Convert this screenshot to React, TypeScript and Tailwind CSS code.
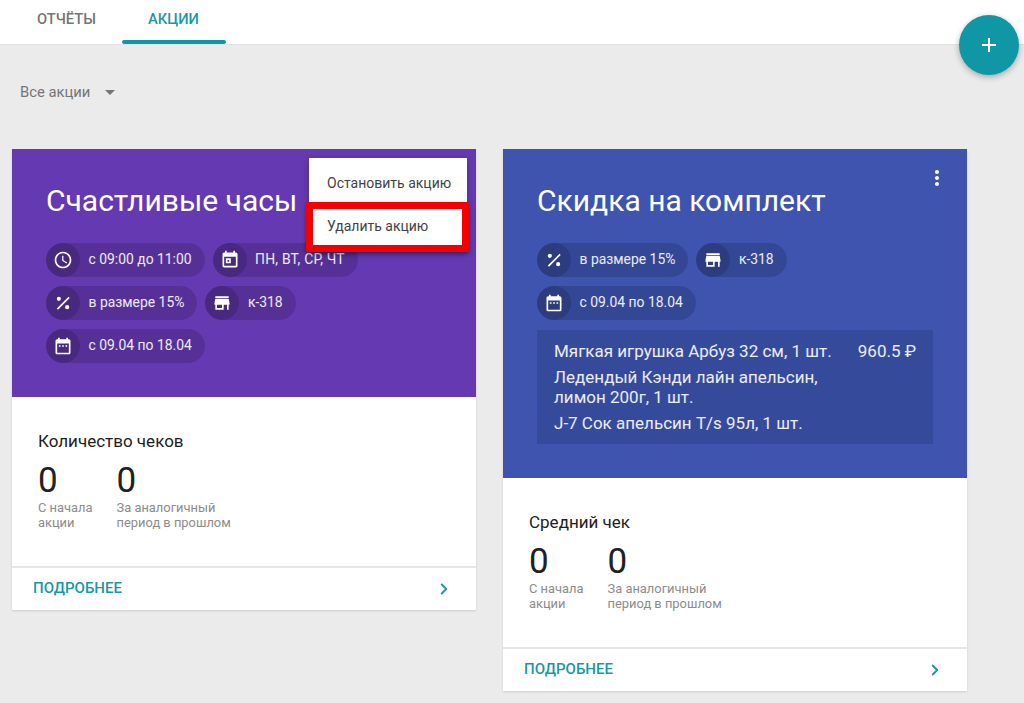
import { ChevronRight } from "lucide-react";

const icons = {
  clock:
    "M11.99 2C6.47 2 2 6.48 2 12s4.47 10 9.99 10C17.52 22 22 17.52 22 12S17.52 2 11.99 2zM12 20c-4.42 0-8-3.58-8-8s3.58-8 8-8 8 3.58 8 8-3.58 8-8 8zm.5-13H11v6l5.25 3.15.75-1.23-4.5-2.67z",
  event:
    "M7 10h6v6H7v-6zm2 2v2h2v-2H9zM16 1v2H8V1H6v2H5c-1.11 0-1.99.9-1.99 2L3 19c0 1.1.89 2 2 2h14c1.1 0 2-.9 2-2V5c0-1.1-.9-2-2-2h-1V1h-2zm3 18H5V8h14v11z",
  percent:
    "M18.6 4.6 20 6 6 20l-1.4-1.4L18.6 4.6zM7 4.5a2.5 2.5 0 1 1 0 5 2.5 2.5 0 0 1 0-5zM17 14.5a2.5 2.5 0 1 1 0 5 2.5 2.5 0 0 1 0-5z",
  store:
    "M20 4H4v2h16V4zm1 10v-2l-1-5H4l-1 5v2h1v6h10v-6h4v6h2v-6h1zm-9 4H6v-4h6v4z",
  range:
    "M9 11H7v2h2v-2zm4 0h-2v2h2v-2zm4 0h-2v2h2v-2zm2-7h-1V2h-2v2H8V2H6v2H5c-1.11 0-1.99.9-1.99 2L3 20c0 1.1.89 2 2 2h14c1.1 0 2-.9 2-2V6c0-1.1-.9-2-2-2zm0 16H5V9h14v11z",
};

type IconName = keyof typeof icons;

function Pill({ icon, text, wide = false }: { icon: IconName; text: string; wide?: boolean }) {
  return (
    <div className="flex h-[34px] items-center rounded-full bg-black/15 pr-[13px]">
      <div className="flex h-[34px] w-[34px] items-center justify-center rounded-full bg-black/15">
        <svg className="h-5 w-5 fill-white" viewBox="0 0 24 24">
          <path d={icons[icon]} />
        </svg>
      </div>
      <span
        className={
          wide
            ? "ml-[8.5px] text-[13.9px] leading-none tracking-[0.2px] text-white/90"
            : "ml-[8.5px] text-[13.9px] leading-none text-white/90"
        }
      >
        {text}
      </span>
    </div>
  );
}

function Stats({ title }: { title: string }) {
  return (
    <div className="px-[26px] pb-[36px] pt-[32px]">
      <div className="text-[17px] leading-[24px] text-[#212121]">{title}</div>
      <div className="mt-[8px] flex gap-[24px]">
        <div>
          <div className="text-[35px] leading-[40px] text-[#212121]">0</div>
          <div className="-mt-[1px] text-[12.9px] leading-[15px] text-[#8c8c8c]">
            С начала
            <br />
            акции
          </div>
        </div>
        <div>
          <div className="text-[35px] leading-[40px] text-[#212121]">0</div>
          <div className="-mt-[1px] text-[12.9px] leading-[15px] text-[#8c8c8c]">
            За аналогичный
            <br />
            период в прошлом
          </div>
        </div>
      </div>
    </div>
  );
}

function CardFooter() {
  return (
    <div className="flex h-[44px] items-center justify-between border-t-2 border-[#e6e6e6] pb-[1px] pl-[21px] pr-[23px]">
      <span className="text-[15px] font-medium text-[#1a97a5]">ПОДРОБНЕЕ</span>
      <ChevronRight className="h-[18px] w-[18px] text-[#1a97a5]" strokeWidth={2.5} />
    </div>
  );
}

export default function App() {
  return (
    <div
      className="relative h-[703px] overflow-hidden bg-[#ebebeb]"
      style={{ fontFamily: "Roboto, sans-serif" }}
    >
      <div className="flex h-[45px] border-b border-[#e2e2e2] bg-white pl-[11px]">
        <div className="w-[111px] pl-[26px] pt-[10px] text-[14.7px] font-medium leading-[18px] text-[#757575]">
          ОТЧЁТЫ
        </div>
        <div className="relative w-[104px] pl-[26px] pt-[10px] text-[14.7px] font-medium leading-[18px] text-[#1a97a5]">
          АКЦИИ
          <div className="absolute bottom-0 left-0 right-0 h-[4px] rounded-full bg-[#0f97a5]" />
        </div>
      </div>

      <button className="absolute left-[959px] top-[15px] flex h-[60px] w-[60px] items-center justify-center rounded-full bg-[#0f97a5] shadow-[0_2px_6px_rgba(0,0,0,0.3)]">
        <svg className="h-6 w-6 fill-white" viewBox="0 0 24 24">
          <path d="M19 13h-6v6h-2v-6H5v-2h6V5h2v6h6v2z" />
        </svg>
      </button>

      <div className="flex items-center pl-[20px] pt-[35px] text-[14.8px] leading-[24px] text-[#757575]">
        Все акции
        <div className="ml-[15px] h-0 w-0 border-x-[5px] border-t-[5px] border-x-transparent border-t-[#757575]" />
      </div>

      <div className="mt-[45px] flex items-start gap-[27px] pl-[12px]">
        <div className="relative w-[464px] bg-white shadow-[0_1px_2px_rgba(0,0,0,0.12)]">
          <div className="bg-[#6539b1] px-[34px] pb-[34px] pt-[34px]">
            <h2 className="text-[30px] leading-[36px] text-white">Счастливые часы</h2>
            <div className="mt-[24px] flex flex-wrap gap-x-[8px] gap-y-[9px]">
              <Pill icon="clock" text="с 09:00 до 11:00" />
              <Pill icon="event" text="ПН, ВТ, СР, ЧТ" wide />
              <Pill icon="percent" text="в размере 15%" />
              <Pill icon="store" text="к-318" />
              <Pill icon="range" text="с 09.04 по 18.04" />
            </div>
          </div>
          <Stats title="Количество чеков" />
          <CardFooter />

          <div className="absolute left-[297px] top-[9px] w-[158px] bg-white text-[14px] text-[#424242] shadow-[0_2px_6px_rgba(0,0,0,0.25)]">
            <div className="flex h-[44px] items-center pl-[18px] pt-[6px]">Остановить акцию</div>
            <div className="-ml-[3px] -mr-[2px] flex h-[50px] items-center rounded-[2px] border-[7px] border-[#f50000] bg-white pb-[2px] pl-[14px] shadow-[0_2px_4px_rgba(0,0,0,0.3)]">
              Удалить акцию
            </div>
          </div>
        </div>

        <div className="relative w-[464px] bg-white shadow-[0_1px_2px_rgba(0,0,0,0.12)]">
          <div className="bg-[#3e54ae] px-[34px] pb-[34px] pt-[34px]">
            <h2 className="text-[30px] leading-[36px] text-white">Скидка на комплект</h2>
            <div className="mt-[24px] flex flex-wrap gap-x-[8px] gap-y-[9px]">
              <Pill icon="percent" text="в размере 15%" />
              <Pill icon="store" text="к-318" />
              <Pill icon="range" text="с 09.04 по 18.04" />
            </div>
            <div className="mt-[10px] flex flex-col gap-[6px] bg-[#364a9b] px-[17px] py-[11px] text-[17px] leading-[20px] text-white/90">
              <div className="flex justify-between">
                <span>Мягкая игрушка Арбуз 32 см, 1 шт.</span>
                <span>960.5 ₽</span>
              </div>
              <div className="w-[290px]">Ледендый Кэнди лайн апельсин, лимон 200г, 1 шт.</div>
              <div>J-7 Сок апельсин T/s 95л, 1 шт.</div>
            </div>
          </div>
          <Stats title="Средний чек" />
          <CardFooter />
          <svg className="absolute left-[422px] top-[17px] h-6 w-6 fill-white" viewBox="0 0 24 24">
            <path d="M12 8c1.1 0 2-.9 2-2s-.9-2-2-2-2 .9-2 2 .9 2 2 2zm0 2c-1.1 0-2 .9-2 2s.9 2 2 2 2-.9 2-2-.9-2-2-2zm0 6c-1.1 0-2 .9-2 2s.9 2 2 2 2-.9 2-2-.9-2-2-2z" />
          </svg>
        </div>
      </div>
    </div>
  );
}
